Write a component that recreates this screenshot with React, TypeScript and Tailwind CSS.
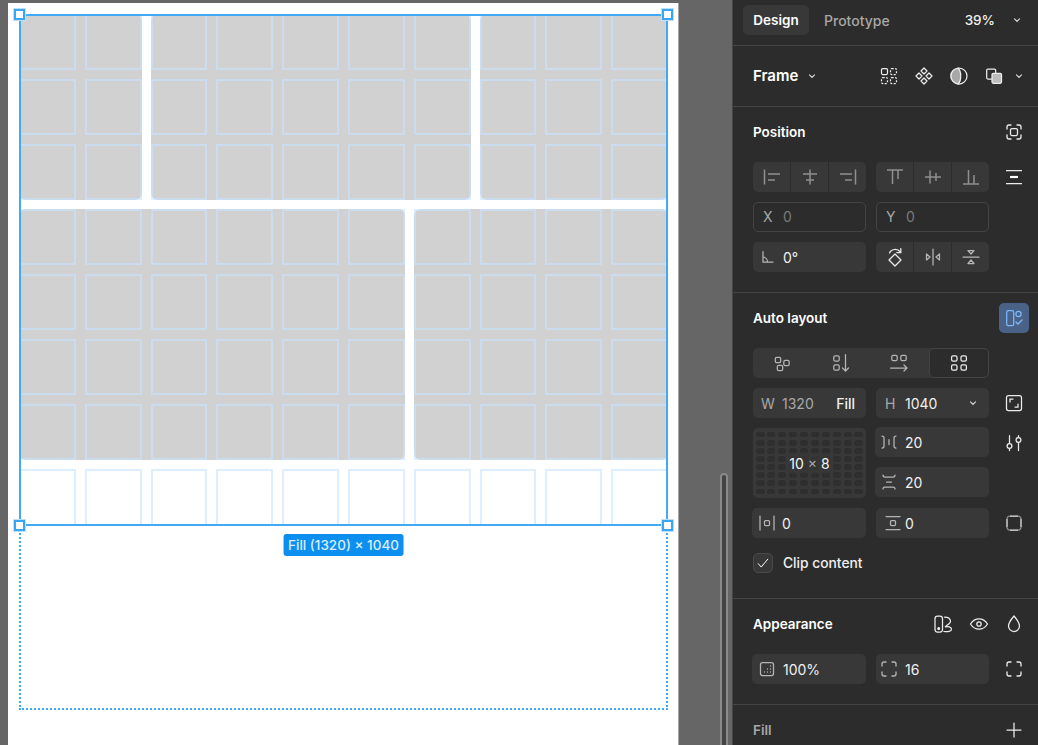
import React from "react";

type IconProps = { children: React.ReactNode; className?: string };
const I = ({ children, className = "text-[#ececec]" }: IconProps) => (
  <svg viewBox="0 0 24 24" fill="none" stroke="currentColor" strokeWidth="1.25" strokeLinecap="round" className={`w-6 h-6 shrink-0 ${className}`}>
    {children}
  </svg>
);

const Chevron = ({ className = "text-[#d8d8d8]" }: { className?: string }) => (
  <I className={className}>
    <path d="M9.5 10.8l2.5 2.5 2.5-2.5" strokeWidth="1.2" />
  </I>
);

const Corners = () => (
  <path d="M9 5H7a2 2 0 0 0-2 2v2M15 5h2a2 2 0 0 1 2 2v2M9 19H7a2 2 0 0 1-2-2v-2M15 19h2a2 2 0 0 0 2-2v-2" strokeWidth="1.3" />
);

const SmallSq = ({ x, y, s = 5.4 }: { x: number; y: number; s?: number }) => (
  <rect x={x - s / 2} y={y - s / 2} width={s} height={s} rx="1.4" />
);

const Label = ({ children }: { children: React.ReactNode }) => (
  <span className="text-[13.5px] font-semibold text-white">{children}</span>
);

const Field = ({ children, className = "" }: { children: React.ReactNode; className?: string }) => (
  <div className={`h-[30px] rounded-[5px] bg-[#383838] flex items-center text-[14px] text-[#f0f0f0] ${className}`}>{children}</div>
);

const Seg = ({ children }: { children: React.ReactNode }) => (
  <div className="flex-1 flex items-center justify-center">{children}</div>
);

const Divided = ({ items }: { items: React.ReactNode[] }) => (
  <div className="h-[30px] rounded-[5px] bg-[#383838] flex divide-x divide-[#2c2c2c]">
    {items.map((it, i) => (
      <Seg key={i}>{it}</Seg>
    ))}
  </div>
);

const dim = "text-[#8f8f8f]";
const mid = "text-[#b5b5b5]";

const RightIcon = ({ children }: { children: React.ReactNode }) => (
  <div className="flex items-center justify-center h-[30px]">{children}</div>
);

const Canvas = () => {
  const cells = Array.from({ length: 80 });
  const handle = "absolute w-[11px] h-[11px] bg-white border-2 border-[#3aa5f3] outline outline-1 outline-[#bfe0fb]";
  return (
    <div className="relative w-[732px] h-full shrink-0 bg-[#666666] pl-2 pt-[3px]">
      <div className="w-[671px] h-[742px] bg-white pl-[11px] pt-[10.5px] border-r border-[#a8a8a8]">
        <div className="relative w-[649px] h-[512px]">
          <div className="absolute inset-0 grid grid-cols-10 grid-rows-8 gap-[9px]">
            <div className="col-span-2 row-span-3 bg-[#d1d1d1] rounded-[7px]" />
            <div className="col-span-5 row-span-3 bg-[#d1d1d1] rounded-[7px]" />
            <div className="col-span-3 row-span-3 bg-[#d1d1d1] rounded-[7px]" />
            <div className="col-span-6 row-span-4 bg-[#d1d1d1] rounded-[7px]" />
            <div className="col-span-4 row-span-4 bg-[#d1d1d1] rounded-[7px]" />
          </div>
          <div className="absolute inset-0 grid grid-cols-10 grid-rows-8 gap-[9px]">
            {cells.map((_, i) => (
              <div key={i} className="border-2 border-[#c4e3ff]/60" />
            ))}
          </div>
          <div className="absolute left-0 top-0 w-[649px] h-[696px] border-2 border-dotted border-[#3aa9f8]" />
          <div className="absolute inset-0 border-2 border-[#42a9f5]" />
          <div className={`${handle} -left-[5px] -top-[5px]`} />
          <div className={`${handle} -right-[5px] -top-[5px]`} />
          <div className={`${handle} -left-[5px] -bottom-[5px]`} />
          <div className={`${handle} -right-[5px] -bottom-[5px]`} />
          <div className="absolute left-1/2 -translate-x-1/2 top-[520px] h-[22px] px-[5px] pt-[1px] flex items-center whitespace-nowrap rounded-[3px] bg-[#0d8fef] text-[13.5px] font-medium text-[#d6eeff]">
            Fill (1320) × 1040
          </div>
        </div>
      </div>
      <div className="absolute left-[720px] top-[473px] w-2 h-[280px] rounded-t-full bg-[#444444] border-2 border-[#8a8a8a]" />
    </div>
  );
};

const Panel = () => (
  <div className="w-[306px] h-full shrink-0 bg-[#2c2c2c] border-l border-[#444444] text-white flex flex-col overflow-hidden">
    {/* Tabs */}
    <div className="h-[46px] shrink-0 border-b border-[#444444] flex items-center pl-[10px] pr-[9px] pb-[5px]">
      <div className="h-[30px] w-[66px] rounded-[5px] bg-[#383838] flex items-center justify-center text-[13.5px] font-semibold">Design</div>
      <div className="ml-[15px] text-[14px] font-medium text-[#a8a8a8]">Prototype</div>
      <div className="ml-auto text-[13.5px] font-medium text-[#f0f0f0] mr-[10px]">39%</div>
      <Chevron />
    </div>
    {/* Frame */}
    <div className="h-[61px] shrink-0 border-b border-[#444444] flex items-center pl-5 pr-[7px]">
      <span className="text-[15px] font-semibold">Frame</span>
      <div className="ml-[2px]">
        <Chevron />
      </div>
      <div className="ml-auto flex items-center gap-[11px]">
        <I>
          <rect x="4.500" y="4.500" width="6" height="6" rx="1.200" />
          <rect x="13.500" y="4.500" width="6" height="6" rx="1.200" strokeDasharray="2 1.400" strokeLinecap="butt" />
          <rect x="4.500" y="13.500" width="6" height="6" rx="1.200" strokeDasharray="2 1.400" strokeLinecap="butt" />
          <rect x="13.500" y="13.500" width="6" height="6" rx="1.200" strokeDasharray="2 1.400" strokeLinecap="butt" />
        </I>
        <I>
          <path d="M12 4l3 3-3 3-3-3zM12 14l3 3-3 3-3-3zM7 9l3 3-3 3-3-3zM17 9l3 3-3 3-3-3z" strokeLinejoin="round" />
        </I>
        <I>
          <path d="M11 4a8 8 0 0 0 0 16 10 10 0 0 0 2.600-8A10 10 0 0 0 11 4z" fill="#a8a8a8" stroke="none" />
          <circle cx="12" cy="12" r="8" />
          <path d="M11 4a10 10 0 0 1 2.600 8A10 10 0 0 1 11 20" />
        </I>
        <I>
          <rect x="4.700" y="5" width="9" height="10" rx="1.200" />
          <rect x="10" y="9.300" width="9.500" height="10" rx="1.200" fill="#bdbdbd" />
        </I>
        <div className="-ml-[10px]">
          <Chevron />
        </div>
      </div>
    </div>
    {/* Position */}
    <section className="shrink-0 border-b border-[#444444] pl-5 pr-[9px] pt-[10px] pb-5 flex flex-col gap-[10px]">
      <div className="h-[30px] flex items-center justify-between mb-[5px]">
        <Label>Position</Label>
        <div className="w-[30px] flex justify-center">
          <I>
            <Corners />
            <rect x="8.500" y="8.500" width="7" height="7" rx="1.500" />
          </I>
        </div>
      </div>
      <div className="grid grid-cols-[113px_113px_30px] gap-x-[10px] gap-y-[10px]">
        <Divided
          items={[
            <I className={dim}><path d="M4.500 4.500v15M8 9h12M8 15h7" strokeWidth="1.500" strokeLinecap="butt" /></I>,
            <I className={dim}><path d="M12 4.500v15M5 9h14M8 15h8" strokeWidth="1.500" strokeLinecap="butt" /></I>,
            <I className={dim}><path d="M19.500 4.500v15M4 9h12M9 15h7" strokeWidth="1.500" strokeLinecap="butt" /></I>,
          ]}
        />
        <Divided
          items={[
            <I className={dim}><path d="M4 5h16M9.500 5v14M15 5v9" strokeWidth="1.500" strokeLinecap="butt" /></I>,
            <I className={dim}><path d="M4 12h16M9 5.500v13M15 8v8" strokeWidth="1.500" strokeLinecap="butt" /></I>,
            <I className={dim}><path d="M4 19h16M9.500 5v14M15 10v9" strokeWidth="1.500" strokeLinecap="butt" /></I>,
          ]}
        />
        <RightIcon>
          <I><path d="M4 5.500h16M4 18.500h16" strokeLinecap="butt" /><path d="M8 12h8" strokeWidth="2.200" stroke="#ffffff" strokeLinecap="butt" /></I>
        </RightIcon>
        <div className="h-[30px] rounded-[5px] border border-[#444444] flex items-center pl-[9px] pb-[2px] text-[14px]">
          <span className="w-5 text-[#a8a8a8]">X</span>
          <span className="text-[#7a7a7a]">0</span>
        </div>
        <div className="h-[30px] rounded-[5px] border border-[#444444] flex items-center pl-[9px] pb-[2px] text-[14px]">
          <span className="w-5 text-[#a8a8a8]">Y</span>
          <span className="text-[#7a7a7a]">0</span>
        </div>
        <div />
        <Field>
          <div className="w-[30px] flex justify-center">
            <I className={mid}><path d="M7 6.500V17h10M7 12a5 5 0 0 1 4.500 5" /></I>
          </div>
          <span>0°</span>
        </Field>
        <Divided
          items={[
            <I><path d="M12 9l6 6-6 6-6-6z" strokeLinejoin="round" /><path d="M6.500 8C8 4 14 3 17.500 7M17.800 3.500V7.500h-4" /></I>,
            <I className={mid}><path d="M12 4v16" /><path d="M5.500 9v6L9 12zM18.500 9v6L15 12z" strokeLinejoin="round" /></I>,
            <I className={mid}><path d="M4 12h16" /><path d="M9 5.500h6L12 9zM9 18.500h6L12 15z" strokeLinejoin="round" /></I>,
          ]}
        />
        <div />
      </div>
    </section>
    {/* Auto layout */}
    <section className="shrink-0 border-b border-[#444444] pl-5 pr-[9px] pt-[10px] pb-[25px]">
      <div className="h-[30px] flex items-center justify-between mb-[15px]">
        <Label>Auto layout</Label>
        <div className="w-[30px] h-[30px] rounded-[5px] bg-[#4a6288] flex items-center justify-center">
          <I className="text-[#7db8fb]">
            <rect x="4.700" y="4.700" width="7" height="15" rx="1.500" />
            <circle cx="16.500" cy="8" r="2.600" />
            <path d="M14 16l2 2 4-4" />
          </I>
        </div>
      </div>
      <div className="grid grid-cols-[113px_113px_30px] gap-x-[10px] gap-y-[10px]">
        <div className="col-span-2 h-[30px] rounded-[5px] bg-[#383838] flex">
          <Seg><I className={mid}><SmallSq x={8} y={9} /><SmallSq x={16.5} y={12} /><SmallSq x={10} y={17} /></I></Seg>
          <Seg><I className={mid}><SmallSq x={7.5} y={7.5} /><SmallSq x={7.5} y={16.5} /><path d="M16.500 3.500v16.500M13.500 17l3 3 3-3" /></I></Seg>
          <Seg><I className={mid}><SmallSq x={7.5} y={7} /><SmallSq x={16.5} y={7} /><path d="M3.500 17H20M17 14l3 3-3 3" /></I></Seg>
          <div className="flex-1 flex items-center justify-center rounded-[5px] bg-[#2c2c2c] border border-[#444444]">
            <I><SmallSq x={7.3} y={7.5} /><SmallSq x={16.7} y={7.5} /><SmallSq x={7.3} y={16.5} /><SmallSq x={16.7} y={16.5} /></I>
          </div>
        </div>
        <div />
        <Field className="pl-2">
          <span className="w-[21px] text-[#a8a8a8]">W</span>
          <span className="text-[#a8a8a8]">1320</span>
          <span className="ml-auto mr-[11px] font-medium">Fill</span>
        </Field>
        <Field className="pl-[9px]">
          <span className="w-5 text-[#a8a8a8]">H</span>
          <span>1040</span>
          <div className="ml-auto mr-[4px]"><Chevron /></div>
        </Field>
        <RightIcon>
          <I><rect x="4.500" y="4.500" width="15" height="15" rx="2" /><path d="M8 11V8h3M16 13v3h-3" /></I>
        </RightIcon>
        <div className="relative h-[70px] rounded-[5px] bg-[#383838] grid grid-cols-10 grid-rows-8 gap-x-[2.4px] gap-y-[2.6px] px-[3px] py-[4px]">
          {Array.from({ length: 80 }).map((_, i) => (
            <div key={i} className="rounded-[3px] bg-[#2e2e2e]" />
          ))}
          <div className="absolute left-1/2 top-1/2 -translate-x-1/2 -translate-y-1/2 px-[1px] bg-[#383838]/70 rounded-[3px] text-[14px] text-[#f4f4f4] whitespace-nowrap">
            10 <span className="text-[#a8a8a8]">×</span> 8
          </div>
        </div>
        <div className="flex flex-col gap-[10px] -ml-[1px] -mt-[1px]">
          <Field className="pl-[2px]">
            <I className={mid}><path d="M5 6c2 0 2 1 2 2v8c0 1 0 2-2 2M12 9.500v5M19 6c-2 0-2 1-2 2v8c0 1 0 2 2 2" /></I>
            <span className="ml-[4px]">20</span>
          </Field>
          <Field className="pl-[2px]">
            <I className={mid}><path d="M6 5c0 2 1 2 2 2h8c1 0 2 0 2-2M9.500 12h5M6 19c0-2 1-2 2-2h8c1 0 2 0 2 2" /></I>
            <span className="ml-[4px]">20</span>
          </Field>
        </div>
        <RightIcon>
          <I><path d="M7.500 4.500v15M16.500 4.500v15" /><circle cx="7.500" cy="15" r="2.400" fill="#2c2c2c" /><circle cx="16.500" cy="9" r="2.400" fill="#2c2c2c" /></I>
        </RightIcon>
        <Field className="-ml-[1px] pl-[3px]">
          <I className={mid}><path d="M5 5v14M19 5v14" /><rect x="9.500" y="9.500" width="5" height="5" rx="1" /></I>
          <span className="ml-[3px]">0</span>
        </Field>
        <Field className="pl-[5px]">
          <I className={mid}><path d="M5 5.500h14M5 18.500h14" /><rect x="9.500" y="9.500" width="5" height="5" rx="1" /></I>
          <span>0</span>
        </Field>
        <RightIcon>
          <I>
            <path d="M8 5h8M8 19h8M5 8v8M19 8v8" strokeLinecap="butt" />
            <path d="M5 8a3 3 0 0 1 3-3M16 5a3 3 0 0 1 3 3M19 16a3 3 0 0 1-3 3M8 19a3 3 0 0 1-3-3" opacity="0.5" strokeLinecap="butt" />
          </I>
        </RightIcon>
      </div>
      <div className="mt-[15px] h-5 flex items-center gap-[10px]">
        <div className="w-5 h-5 rounded-[5px] bg-[#383838] border border-[#4a4a4a] flex items-center justify-center">
          <svg viewBox="0 0 20 20" fill="none" stroke="white" strokeWidth="1.100" className="w-5 h-5">
            <path d="M4.500 10.500l3.500 4 7.500-9" />
          </svg>
        </div>
        <span className="pt-[1px] text-[13.8px] font-medium text-[#f0f0f0]">Clip content</span>
      </div>
    </section>
    {/* Appearance */}
    <section className="shrink-0 border-b border-[#444444] pl-5 pr-[9px] pt-[10px] pb-5">
      <div className="h-[30px] flex items-center mb-[15px]">
        <Label>Appearance</Label>
        <div className="ml-auto flex items-center gap-[11.5px] pr-[3px]">
          <I>
            <rect x="4" y="4" width="7.500" height="16" rx="2.500" />
            <circle cx="7.700" cy="16.500" r="0.900" fill="currentColor" />
            <path d="M13.500 5c3.500 0 6 1.500 6 4.500 0 2-3.500 3.500-5.500 5.500 3-1 6.500 0 6.500 2.200 0 2.300-4 2.800-7.500 2.300" />
          </I>
          <I><path d="M3.500 12C6 8 9 6.800 12 6.800S18 8 20.500 12C18 16 15 17.200 12 17.200S6 16 3.500 12z" /><circle cx="12" cy="12" r="2.200" /></I>
          <I><path d="M12 4c3 3.500 5.500 6.500 5.500 10a5.500 5.500 0 0 1-11 0C6.500 10.500 9 7.500 12 4z" strokeLinejoin="round" /></I>
        </div>
      </div>
      <div className="grid grid-cols-[113px_113px_30px] gap-x-[10px]">
        <Field className="-ml-[1px] pl-[3px] w-[114px]">
          <I className={mid}>
            <rect x="5.500" y="5.500" width="13" height="13" rx="2" />
            <path d="M15.500 9v.01M15.500 12v.01M15.500 15v.01M12.500 12v.01M12.500 15v.01M9.500 15v.01" strokeWidth="1.300" />
          </I>
          <span className="ml-[4px]">100%</span>
        </Field>
        <Field className="pl-[1px]">
          <I className={mid}><Corners /></I>
          <span className="ml-[4px]">16</span>
        </Field>
        <RightIcon>
          <I><Corners /></I>
        </RightIcon>
      </div>
    </section>
    {/* Fill */}
    <section className="shrink-0 pl-5 pr-[9px] pt-[10px]">
      <div className="h-[30px] flex items-center justify-between">
        <span className="text-[13.5px] font-semibold text-[#a8a8a8]">Fill</span>
        <div className="w-[30px] flex justify-center">
          <I><path d="M12 5v14M5 12h14" /></I>
        </div>
      </div>
    </section>
  </div>
);

export default function App() {
  return (
    <div className="w-[1038px] h-[745px] flex overflow-hidden font-['Inter',sans-serif]">
      <Canvas />
      <Panel />
    </div>
  );
}
